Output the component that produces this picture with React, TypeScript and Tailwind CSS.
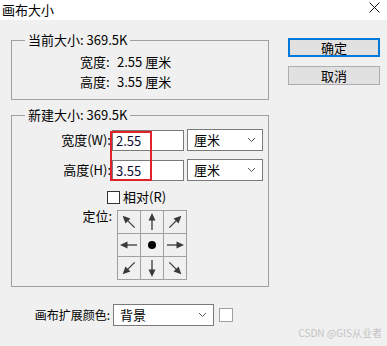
import React from "react";

const FONT = "font-['Noto_Sans_CJK_SC','Noto_Sans',sans-serif]";

function Arrow({ rot }: { rot: number }) {
  return (
    <svg width="22" height="22" viewBox="0 0 22 22">
      <g transform={`rotate(${rot} 11 11)`}>
        <line x1="3" y1="11" x2="14" y2="11" stroke="#3a3a3a" strokeWidth="1.3" />
        <polygon points="20,11 12.5,7.5 12.5,14.5" fill="#3a3a3a" />
      </g>
    </svg>
  );
}

function Chevron() {
  return (
    <svg width="9" height="6" viewBox="0 0 9 6" className="shrink-0">
      <polyline points="1,1 4.5,4.5 8,1" fill="none" stroke="#555" strokeWidth="1" />
    </svg>
  );
}

function Select({ text, w }: { text: string; w: string }) {
  return (
    <div className={`${w} h-[22px] bg-white border border-[#7a7a7a] flex items-center justify-between pl-[6px] pr-[6px] text-[13px] leading-[20px] text-black`}>
      <span>{text}</span>
      <Chevron />
    </div>
  );
}

export default function App() {
  const cells: (number | null)[] = [225, 270, 315, 180, null, 0, 135, 90, 45];
  return (
    <div className={`w-[387px] h-[346px] bg-[#f0f0f0] relative overflow-hidden text-black ${FONT}`}>
      {/* title bar */}
      <div className="h-[20px] bg-white flex items-center justify-between pl-[2px] pr-[7px]">
        <span className="text-[13px] leading-[20px]">画布大小</span>
        <svg width="11" height="11" viewBox="0 0 11 11" className="mb-[5px]">
          <line x1="0.5" y1="0.5" x2="10.5" y2="10.5" stroke="#111" strokeWidth="1" />
          <line x1="10.5" y1="0.5" x2="0.5" y2="10.5" stroke="#111" strokeWidth="1" />
        </svg>
      </div>

      <div className="flex pl-[11px]">
        {/* left column */}
        <div className="w-[258px] flex flex-col">
          <fieldset className="mt-[12px] border border-[#a0a0a0] min-w-0">
            <legend className="ml-[13px] px-[3px] text-[13px] leading-[16px]">当前大小: 369.5K</legend>
            <div className="pt-[4px] pb-[7px] pl-[68px] text-[13px]">
              <div className="h-[20px] leading-[20px] flex">
                <span className="w-[37px]">宽度:</span>
                <span>2.55 厘米</span>
              </div>
              <div className="h-[20px] leading-[20px] flex">
                <span className="w-[37px]">高度:</span>
                <span>3.55 厘米</span>
              </div>
            </div>
          </fieldset>

          <fieldset className="mt-[7px] border border-[#a0a0a0] min-w-0">
            <legend className="ml-[13px] px-[3px] text-[13px] leading-[16px]">新建大小: 369.5K</legend>
            <div className="relative pt-[6px] pb-[6px] text-[13px]">
              <div className="flex flex-col gap-[8px]">
                {[
                  ["宽度(W):", "2.55"],
                  ["高度(H):", "3.55"],
                ].map(([label, val]) => (
                  <div key={label} className="flex items-center h-[22px]">
                    <div className="w-[99px] text-right leading-[20px]">{label}</div>
                    <div className="ml-[1px] w-[72px] h-[21px] bg-white border border-[#7a7a7a] pl-[3px] leading-[19px] text-[13px] text-[#0a0a30]">
                      {val}
                    </div>
                    <div className="ml-[3px]">
                      <Select text="厘米" w="w-[76px]" />
                    </div>
                  </div>
                ))}
              </div>

              <div className="flex items-center h-[16px] mt-[8px] pl-[95px]">
                <div className="w-[13px] h-[13px] border border-[#333] bg-white" />
                <span className="ml-[3px] leading-[16px]">相对(R)</span>
              </div>

              <div className="flex items-start mt-[3px]">
                <div className="w-[100px] text-right leading-[16px]">定位:</div>
                <div className="ml-[5px] mt-[2px] grid grid-cols-3 gap-px bg-[#a0a0a0] p-px w-[70px]">
                  {cells.map((r, i) => (
                    <div key={i} className="w-[22px] h-[22px] bg-[#f0f0f0] flex items-center justify-center">
                      {r === null ? (
                        <div className="w-[8px] h-[8px] rounded-full bg-black" />
                      ) : (
                        <Arrow rot={r} />
                      )}
                    </div>
                  ))}
                </div>
              </div>

              {/* red highlight overlay */}
              <div className="absolute left-[98px] top-[8px] w-[42px] h-[50px] border-2 border-[#e0232a]" />
            </div>
          </fieldset>

          <div className="flex items-center mt-[17px] h-[22px]">
            <div className="w-[99px] text-right text-[12px] leading-[20px] whitespace-nowrap">画布扩展颜色:</div>
            <div className="ml-[3px]">
              <Select text="背景" w="w-[101px]" />
            </div>
            <div className="ml-[5px] w-[14px] h-[14px] bg-white border border-[#a0a0a0]" />
          </div>
        </div>

        {/* right column */}
        <div className="ml-[19px] mt-[18px] flex flex-col gap-[9px]">
          <button className="w-[92px] h-[19px] bg-[#e1e1e1] border-2 border-[#0078d7] text-[13px] leading-[15px] flex items-center justify-center">
            确定
          </button>
          <button className="w-[92px] h-[19px] bg-[#e1e1e1] border border-[#adadad] text-[13px] leading-[17px] flex items-center justify-center">
            取消
          </button>
        </div>
      </div>

      <div className="absolute right-[5px] bottom-[7px] text-[10px] leading-[12px] text-[#c4c4c4]">CSDN @GIS从业者</div>
    </div>
  );
}
